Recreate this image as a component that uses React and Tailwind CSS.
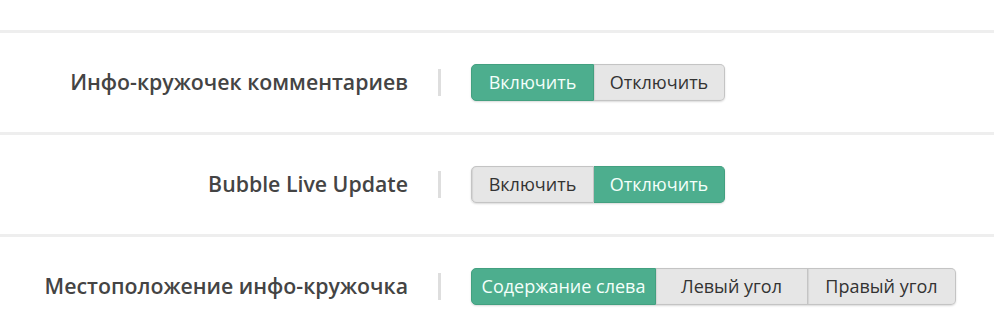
import React from "react";

const rows = [
  { label: "Инфо-кружочек комментариев", opts: [["Включить", "w-[123px]"], ["Отключить", "w-[131px]"]], active: 0 },
  { label: "Bubble Live Update", opts: [["Включить", "w-[123px]"], ["Отключить", "w-[131px]"]], active: 1 },
  { label: "Местоположение инфо-кружочка", opts: [["Содержание слева", "w-[185px]"], ["Левый угол", "w-[152px]"], ["Правый угол", "w-[148px]"]], active: 0 },
];

function Group({ opts, active }) {
  return (
    <div className="flex h-[37px] rounded-[5px] shadow-[0_1px_2px_rgba(0,0,0,0.15)]">
      {opts.map(([o, w], i) => {
        const first = i === 0;
        const last = i === opts.length - 1;
        const on = i === active;
        return (
          <div
            key={o}
            className={
              "flex items-center justify-center whitespace-nowrap text-[18px] border " +
              w +
              " " +
              (first ? "rounded-l-[5px] " : "") +
              (last ? "rounded-r-[5px] " : "") +
              (!first ? "border-l-0 " : "") +
              (on
                ? "bg-[#4dae8e] border-[#43a080] text-[#f4fffa]"
                : "bg-[#e6e6e6] border-[#c4c4c4] text-[#333] shadow-[inset_1px_0_1px_rgba(0,0,0,0.08)]")
            }
          >
            {o}
          </div>
        );
      })}
    </div>
  );
}

export default function App() {
  return (
    <div className="w-[994px] h-[331px] bg-white overflow-hidden" style={{ fontFamily: '"Open Sans", sans-serif' }}>
      <div className="h-[30px]" />
      {rows.map((r) => (
        <div key={r.label} className="border-t-[3px] border-[#eeeeee] h-[102px] flex items-center">
          <div className="w-[408px] text-right text-[21.3px] font-semibold text-[#444] pb-[1px]">{r.label}</div>
          <div className="ml-[30px] w-[3px] h-[27px] bg-[#dedede]" />
          <div className="ml-[30px]">
            <Group opts={r.opts} active={r.active} />
          </div>
        </div>
      ))}
    </div>
  );
}
